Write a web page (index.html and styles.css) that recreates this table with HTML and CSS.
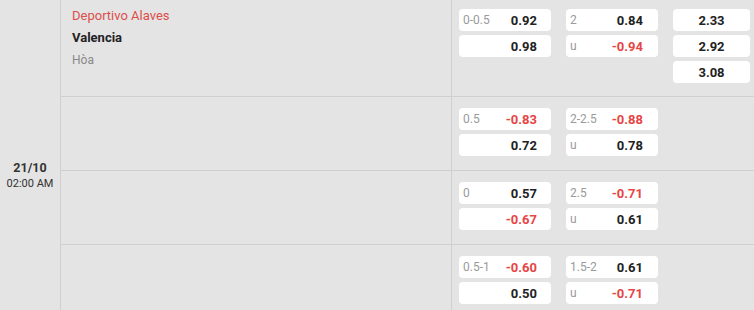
FILE: index.html
```html
<!DOCTYPE html>
<html>
<head>
<meta charset="utf-8">
<link rel="stylesheet" href="styles.css">
</head>
<body>
<div class="match">
  <div class="date-cell">
    <div class="date">21/10</div>
    <div class="time">02:00 AM</div>
  </div>
  <div class="rows">
    <div class="row first">
      <div class="teams">
        <div class="home">Deportivo Alaves</div>
        <div class="away">Valencia</div>
        <div class="draw">Hòa</div>
      </div>
      <div class="odds">
        <div class="col hc">
          <div class="box"><span class="lbl">0-0.5</span><span class="val">0.92</span></div>
          <div class="box"><span class="lbl"></span><span class="val">0.98</span></div>
        </div>
        <div class="col ou">
          <div class="box"><span class="lbl">2</span><span class="val">0.84</span></div>
          <div class="box"><span class="lbl">u</span><span class="val neg">-0.94</span></div>
        </div>
        <div class="col x12">
          <div class="box"><span class="val">2.33</span></div>
          <div class="box"><span class="val">2.92</span></div>
          <div class="box"><span class="val">3.08</span></div>
        </div>
      </div>
    </div>
    <div class="row">
      <div class="teams"></div>
      <div class="odds">
        <div class="col hc">
          <div class="box"><span class="lbl">0.5</span><span class="val neg">-0.83</span></div>
          <div class="box"><span class="lbl"></span><span class="val">0.72</span></div>
        </div>
        <div class="col ou">
          <div class="box"><span class="lbl">2-2.5</span><span class="val neg">-0.88</span></div>
          <div class="box"><span class="lbl">u</span><span class="val">0.78</span></div>
        </div>
        <div class="col x12"></div>
      </div>
    </div>
    <div class="row">
      <div class="teams"></div>
      <div class="odds">
        <div class="col hc">
          <div class="box"><span class="lbl">0</span><span class="val">0.57</span></div>
          <div class="box"><span class="lbl"></span><span class="val neg">-0.67</span></div>
        </div>
        <div class="col ou">
          <div class="box"><span class="lbl">2.5</span><span class="val neg">-0.71</span></div>
          <div class="box"><span class="lbl">u</span><span class="val">0.61</span></div>
        </div>
        <div class="col x12"></div>
      </div>
    </div>
    <div class="row">
      <div class="teams"></div>
      <div class="odds">
        <div class="col hc">
          <div class="box"><span class="lbl">0.5-1</span><span class="val neg">-0.60</span></div>
          <div class="box"><span class="lbl"></span><span class="val">0.50</span></div>
        </div>
        <div class="col ou">
          <div class="box"><span class="lbl">1.5-2</span><span class="val">0.61</span></div>
          <div class="box"><span class="lbl">u</span><span class="val neg">-0.71</span></div>
        </div>
        <div class="col x12"></div>
      </div>
    </div>
  </div>
</div>
</body>
</html>
```
FILE: styles.css
```css
html, body {
  margin: 0;
  padding: 0;
  background: #e4e4e4;
  font-family: Roboto, "Liberation Sans", Arial, sans-serif;
  overflow: hidden;
}
.match {
  display: flex;
  width: 754px;
  background: #e4e4e4;
}
.date-cell {
  width: 61px;
  border-right: 1px solid #cfcfcf;
  display: flex;
  flex-direction: column;
  justify-content: center;
  align-items: center;
  padding-top: 32px;
  box-sizing: border-box;
  color: #333;
}
.date {
  font-size: 12.5px;
  font-weight: 700;
  line-height: 16px;
}
.time {
  font-size: 11px;
  line-height: 16px;
}
.rows {
  flex: 1;
  display: flex;
  flex-direction: column;
}
.row {
  display: flex;
  border-bottom: 1px solid #cfcfcf;
}
.teams {
  flex: 1;
  border-right: 1px solid #cfcfcf;
  padding: 5px 0 0 11px;
  font-size: 13px;
  line-height: 22px;
}
.home { color: #dc4e4b; }
.away { color: #222; font-weight: 700; }
.draw { color: #888; font-size: 12px; }
.odds {
  width: 302px;
  box-sizing: border-box;
  padding: 11px 0 10px 7px;
  display: grid;
  grid-template-columns: 92px 92px 77px;
  column-gap: 15px;
  align-items: start;
}
.row.first .odds {
  padding-top: 9px;
  padding-bottom: 9px;
}
.box {
  height: 22px;
  background: #fff;
  border-radius: 4px;
  margin-bottom: 4px;
  display: flex;
  align-items: center;
  justify-content: space-between;
  padding: 0 14px 0 4px;
  box-sizing: border-box;
}
.ou .box { padding-right: 15px; }
.x12 .box {
  justify-content: center;
  padding: 0;
}
.lbl {
  font-size: 12px;
  color: #9a9a9a;
}
.val {
  font-size: 13px;
  font-weight: 700;
  color: #222;
}
.val.neg { color: #e64545; }
```
